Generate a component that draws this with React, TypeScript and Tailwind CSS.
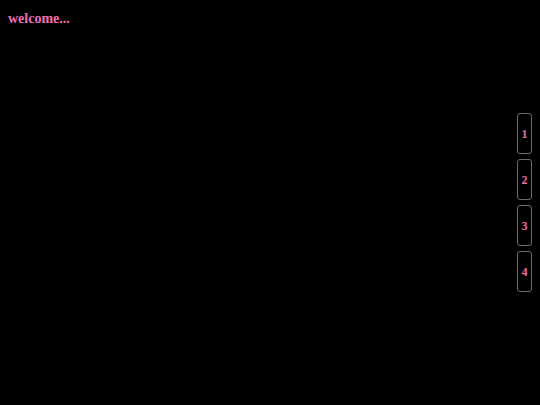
import React from 'react';

const pages = ['1', '2', '3', '4'];

const App: React.FC = () => {
  return (
    <div className="h-screen w-full bg-black flex" style={{ fontFamily: '"Liberation Serif", serif' }}>
      <div className="flex-1 pl-2 pt-[10px]">
        <h1 className="text-[14px] leading-[18px] font-bold text-[#f06cb4]">welcome...</h1>
      </div>
      <nav className="flex flex-col justify-center gap-[5px] pr-2">
        {pages.map((p) => (
          <button
            key={p}
            className="w-[15px] h-[41px] rounded-[3px] border border-[#6b6b6b] flex items-center justify-center text-[12px] font-bold text-[#e86cb0]"
          >
            {p}
          </button>
        ))}
      </nav>
    </div>
  );
};

export default App;
